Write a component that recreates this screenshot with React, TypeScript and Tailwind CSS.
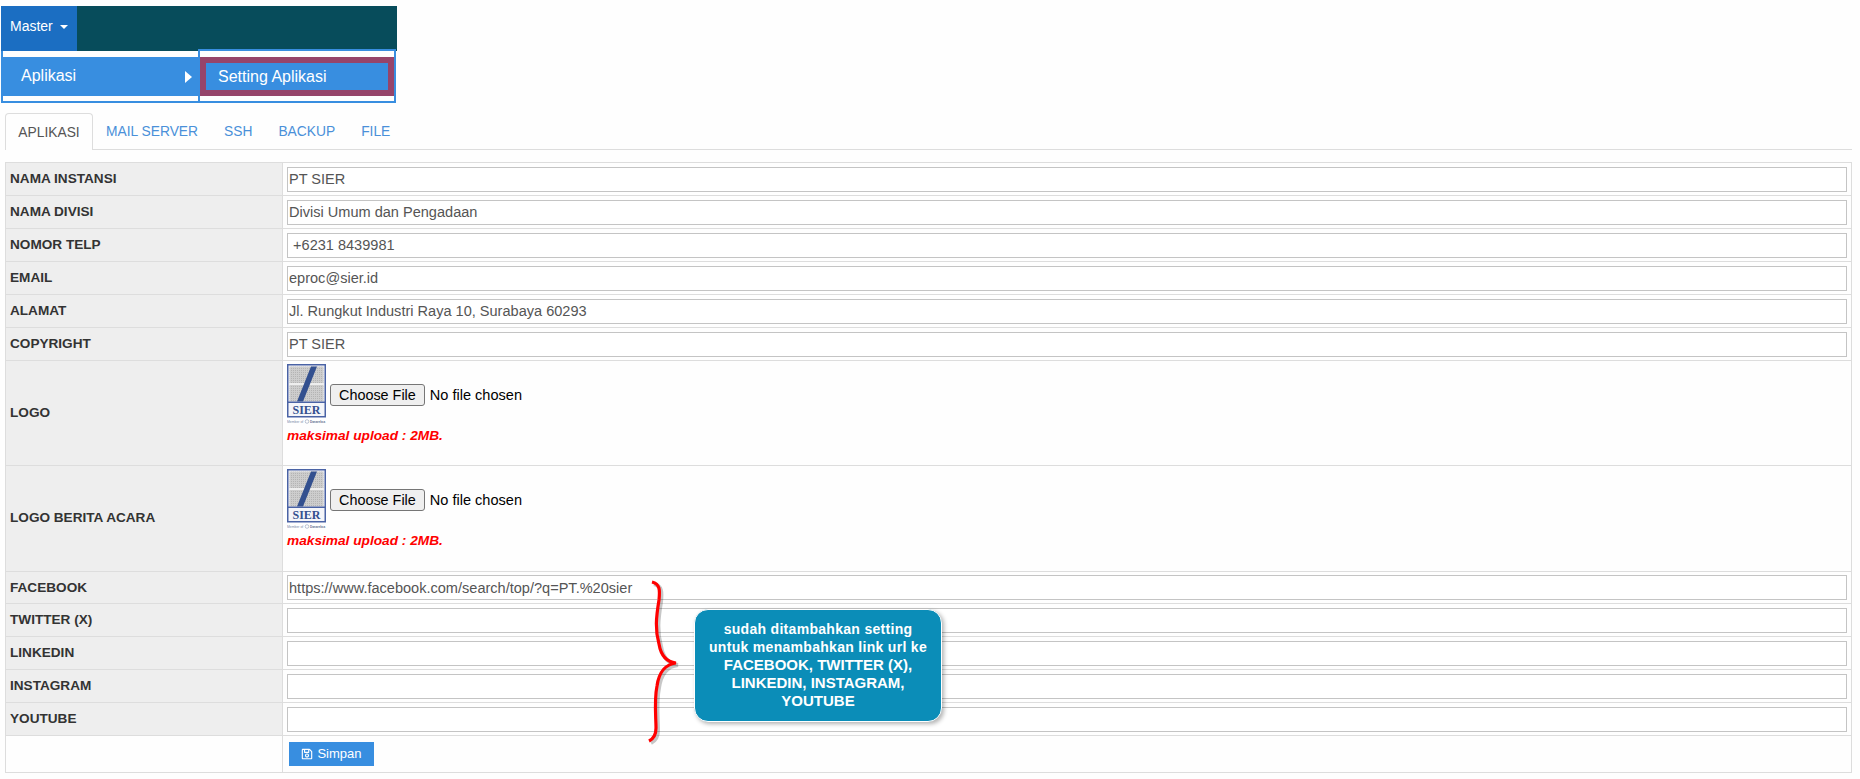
import React from "react";
import { FaRegSave } from "react-icons/fa";

function Logo({ id }: { id: string }) {
  return (
    <svg width="39" height="61" viewBox="0 0 39 61" className="block shrink-0">
      <defs>
        <pattern id={id} width="2" height="2" patternUnits="userSpaceOnUse">
          <rect width="2" height="2" fill="#cdcdcd" />
          <rect width="1" height="1" fill="#b4b4b4" />
        </pattern>
      </defs>
      <rect x="0.75" y="0.75" width="37.5" height="52" fill="#f4f5f9" stroke="#4a63a5" strokeWidth="1.5" />
      <rect x="2.5" y="2.5" width="34" height="35" fill={`url(#${id})`} />
      <rect x="2" y="19" width="35" height="2" fill="#eeeeee" />
      <polygon points="24,2.5 30,2.5 16,37.5 10,37.5" fill="#33508f" />
      <rect x="1" y="37.5" width="37" height="1.5" fill="#4a63a5" />
      <text x="19.5" y="50" textAnchor="middle" fontSize="12" fontWeight="700" fill="#33508f" fontFamily="Liberation Serif, serif">SIER</text>
      <text x="0" y="59" fontSize="3.4" fill="#7b8aa8" fontFamily="Liberation Sans, sans-serif">Member of</text>
      <circle cx="20" cy="57.5" r="1.8" fill="none" stroke="#7b8aa8" strokeWidth="0.5" />
      <text x="23" y="59" fontSize="3" fontWeight="700" fill="#5f6f90" fontFamily="Liberation Sans, sans-serif">Danareksa</text>
    </svg>
  );
}

function TextRow({ label, value, height = "h-[33px]" }: { label: string; value: string; height?: string }) {
  return (
    <tr className={height}>
      <td className="border border-[#ddd] bg-[#eeeeee] px-[4px] align-middle text-[13.6px] leading-[18px] font-bold text-[#333]">
        {label}
      </td>
      <td className="border border-[#ddd] px-[4px] align-middle">
        <input
          readOnly
          value={value}
          className="block h-[25px] w-full border border-[#c4c4c4] bg-white px-[1px] text-[14.55px] text-[#555] outline-none"
        />
      </td>
    </tr>
  );
}

function FileRow({ id, label, height }: { id: string; label: string; height: string }) {
  return (
    <tr className={height}>
      <td className="border border-[#ddd] bg-[#eeeeee] px-[4px] align-middle text-[13.6px] font-bold text-[#333]">
        {label}
      </td>
      <td className="border border-[#ddd] px-[4px] pb-[4px] align-top">
        <div className="flex items-start pt-[3px]">
          <Logo id={id} />
          <input
            type="file"
            className="mt-[20px] ml-[4px] w-[300px] text-[14.55px] text-black file:mr-[5px] file:h-[22px] file:rounded-[3px] file:border file:border-[#767676] file:bg-[#efefef] file:px-[8px] file:text-[14.4px] file:text-black"
          />
        </div>
        <div className="mt-[2px] text-[13.7px] leading-[18px] font-bold text-[#ff0000] italic">maksimal upload : 2MB.</div>
      </td>
    </tr>
  );
}

export default function App() {
  return (
    <div className="relative h-[779px] overflow-hidden bg-[#fefefe] font-['Liberation_Sans',Arial,sans-serif]">
      <div className="ml-[1px] w-[396px] pt-[6px]">
        <div className="flex h-[45px] bg-[#074c5b]">
          <div className="flex w-[76px] items-center bg-[#1b6ec2] pb-[5px] pl-[9px] text-[14px] text-white">
            Master
            <span className="mt-[2px] ml-[7px] border-x-[4px] border-t-[4px] border-x-transparent border-t-white" />
          </div>
        </div>
        <div className="relative -mt-[2px] flex h-[54px]">
          <div className="mt-[2px] h-[52px] w-[197px] border-b-2 border-l-2 border-[#388ee0] pt-[6px]">
            <div className="flex h-[39px] items-center justify-between bg-[#388ee0] pr-[6px] pb-[2px] pl-[18px] text-[16px] text-white">
              Aplikasi
              <span className="mt-[2px] border-y-[6px] border-l-[7px] border-y-transparent border-l-white" />
            </div>
          </div>
          <div className="h-[54px] w-[198px] border-2 border-[#388ee0] pt-[6px]">
            <div className="flex h-[39px] items-center border-[6px] border-[#96446a] bg-[#388ee0] pl-[12px] text-[16px] text-white">
              Setting Aplikasi
            </div>
          </div>
        </div>
      </div>

      <div className="mx-[5px] mt-[10px] w-[1847px]">
        <div className="flex h-[37px] items-stretch border-b border-[#ddd] text-[13.8px]">
          <div className="z-10 -mb-[1px] flex w-[88px] items-center justify-center rounded-t-[4px] border border-b-0 border-[#ddd] bg-[#fefefe] pt-[2px] text-[#555]">
            APLIKASI
          </div>
          <div className="flex items-center pt-[2px] pl-[13px] text-[#4a90d9]">MAIL SERVER</div>
          <div className="flex items-center pt-[2px] pl-[26px] text-[#4a90d9]">SSH</div>
          <div className="flex items-center pt-[2px] pl-[26px] text-[#4a90d9]">BACKUP</div>
          <div className="flex items-center pt-[2px] pl-[26px] text-[#4a90d9]">FILE</div>
        </div>

        <table className="mt-[12px] w-full table-fixed border-collapse">
          <colgroup>
            <col className="w-[277px]" />
            <col />
          </colgroup>
          <tbody>
            <TextRow label="NAMA INSTANSI" value="PT SIER" />
            <TextRow label="NAMA DIVISI" value="Divisi Umum dan Pengadaan" />
            <TextRow label="NOMOR TELP" value=" +6231 8439981" />
            <TextRow label="EMAIL" value="eproc@sier.id" />
            <TextRow label="ALAMAT" value="Jl. Rungkut Industri Raya 10, Surabaya 60293" />
            <TextRow label="COPYRIGHT" value="PT SIER" />
            <FileRow id="logo-a" label="LOGO" height="h-[105px]" />
            <FileRow id="logo-b" label="LOGO BERITA ACARA" height="h-[106px]" />
            <TextRow label="FACEBOOK" value="https://www.facebook.com/search/top/?q=PT.%20sier" height="h-[32px]" />
            <TextRow label="TWITTER (X)" value="" />
            <TextRow label="LINKEDIN" value="" />
            <TextRow label="INSTAGRAM" value="" />
            <TextRow label="YOUTUBE" value="" />
            <tr className="h-[37px]">
              <td className="border border-[#ddd]" />
              <td className="border border-[#ddd] px-[6px] align-middle">
                <button className="flex h-[24px] w-[85px] items-center justify-center gap-[4px] bg-[#388ee0] text-[13px] text-white">
                  <FaRegSave className="text-[12px]" />
                  Simpan
                </button>
              </td>
            </tr>
          </tbody>
        </table>
      </div>

      <svg className="absolute top-[578px] left-[640px]" width="50" height="170" viewBox="0 0 50 170" fill="none">
        <path
          d="M12 4 C20 6 20 12 19 22 C16 40 15 52 19 66 C21 78 27 84 36 85 C26 86 19 94 17 108 C14 122 16 140 16 150 C16 158 13 161 9 163"
          stroke="#000"
          strokeOpacity="0.22"
          strokeWidth="4"
          transform="translate(2 2)"
        />
        <path
          d="M12 4 C20 6 20 12 19 22 C16 40 15 52 19 66 C21 78 27 84 36 85 C26 86 19 94 17 108 C14 122 16 140 16 150 C16 158 13 161 9 163"
          stroke="#ff0000"
          strokeWidth="3.2"
        />
      </svg>

      <div className="absolute top-[609px] left-[694px] flex h-[113px] w-[248px] flex-col items-center justify-center rounded-[14px] border border-white bg-[#0b8db8] pb-[2px] text-center text-[15px] leading-[18px] font-bold text-white shadow-[2px_2px_4px_rgba(0,0,0,0.3)]">
        <div className="text-[14px] tracking-[0.3px]">sudah ditambahkan setting</div>
        <div className="text-[14px] tracking-[0.3px]">untuk menambahkan link url ke</div>
        <div>FACEBOOK, TWITTER (X),</div>
        <div>LINKEDIN, INSTAGRAM,</div>
        <div>YOUTUBE</div>
      </div>
    </div>
  );
}
